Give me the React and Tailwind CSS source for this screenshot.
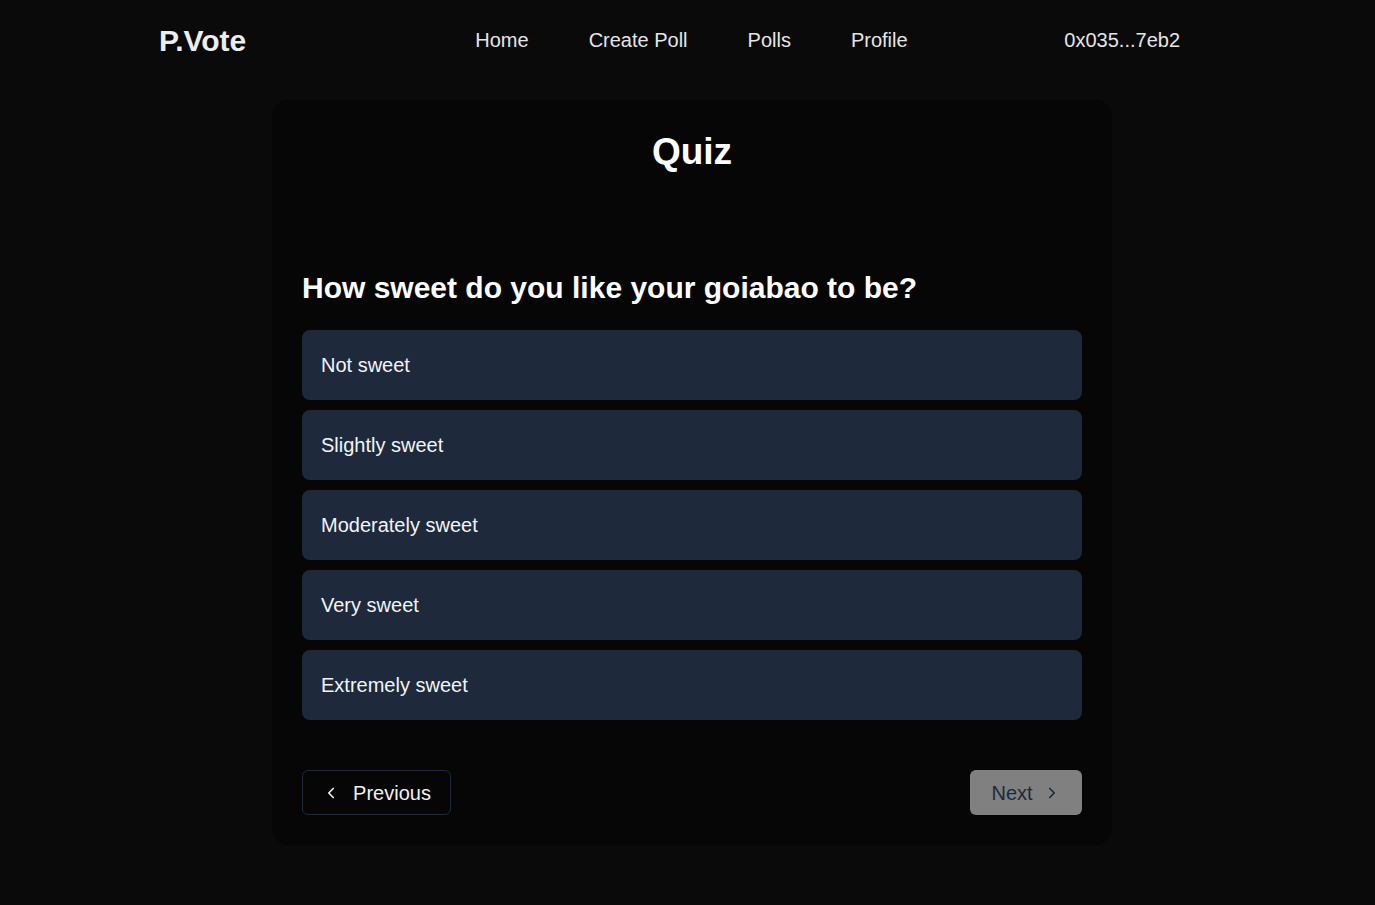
import React from "react";

const options = ["Not sweet", "Slightly sweet", "Moderately sweet", "Very sweet", "Extremely sweet"];

export default function App() {
  return (
    <div className="min-h-[905px] bg-[#0a0a0a] text-[#f1f1f1]" style={{ fontFamily: '"Liberation Sans", Arial, sans-serif' }}>
      <header className="flex items-center h-[80px] pl-[159px] pr-[195px]">
        <div className="text-[30px] font-bold text-[#ededed] leading-[36px] mt-[1px]">P.Vote</div>
        <nav className="flex items-center gap-[60px] ml-[229px] text-[20px] text-[#e5e5e5]">
          <a>Home</a>
          <a>Create Poll</a>
          <a>Polls</a>
          <a>Profile</a>
        </nav>
        <div className="ml-auto text-[20px] text-[#e5e5e5]">0x035...7eb2</div>
      </header>
      <main className="pt-[20px]">
        <div className="ml-[272px] w-[840px] bg-[#060606] rounded-2xl px-[30px] pt-[28px] pb-[30px]">
          <h1 className="text-center text-[37px] font-bold text-white leading-[48px]">Quiz</h1>
          <h2 className="mt-[92px] text-[30px] font-bold text-white leading-[40px]">How sweet do you like your goiabao to be?</h2>
          <div className="mt-[22px] flex flex-col gap-[10px]">
            {options.map((o) => (
              <button key={o} className="h-[70px] w-full rounded-lg bg-[#1e293b] text-left pl-[19px] text-[20px] text-[#f1f5f9]">
                {o}
              </button>
            ))}
          </div>
          <div className="mt-[50px] flex justify-between">
            <button className="h-[45px] w-[149px] flex items-center justify-center gap-[13px] rounded-md border border-[#1e293b] text-[20px] text-[#f1f1f1]">
              <svg width="18" height="18" viewBox="0 0 24 24" fill="none" stroke="currentColor" strokeWidth="2.2" strokeLinecap="round" strokeLinejoin="round"><path d="m15 18-6-6 6-6" /></svg>
              <span>Previous</span>
            </button>
            <button className="h-[45px] w-[112px] flex items-center justify-center gap-[10px] rounded-md bg-[#808080] text-[20px] text-[#1e293b]">
              <span>Next</span>
              <svg width="18" height="18" viewBox="0 0 24 24" fill="none" stroke="currentColor" strokeWidth="2.2" strokeLinecap="round" strokeLinejoin="round"><path d="m9 18 6-6-6-6" /></svg>
            </button>
          </div>
        </div>
      </main>
    </div>
  );
}
